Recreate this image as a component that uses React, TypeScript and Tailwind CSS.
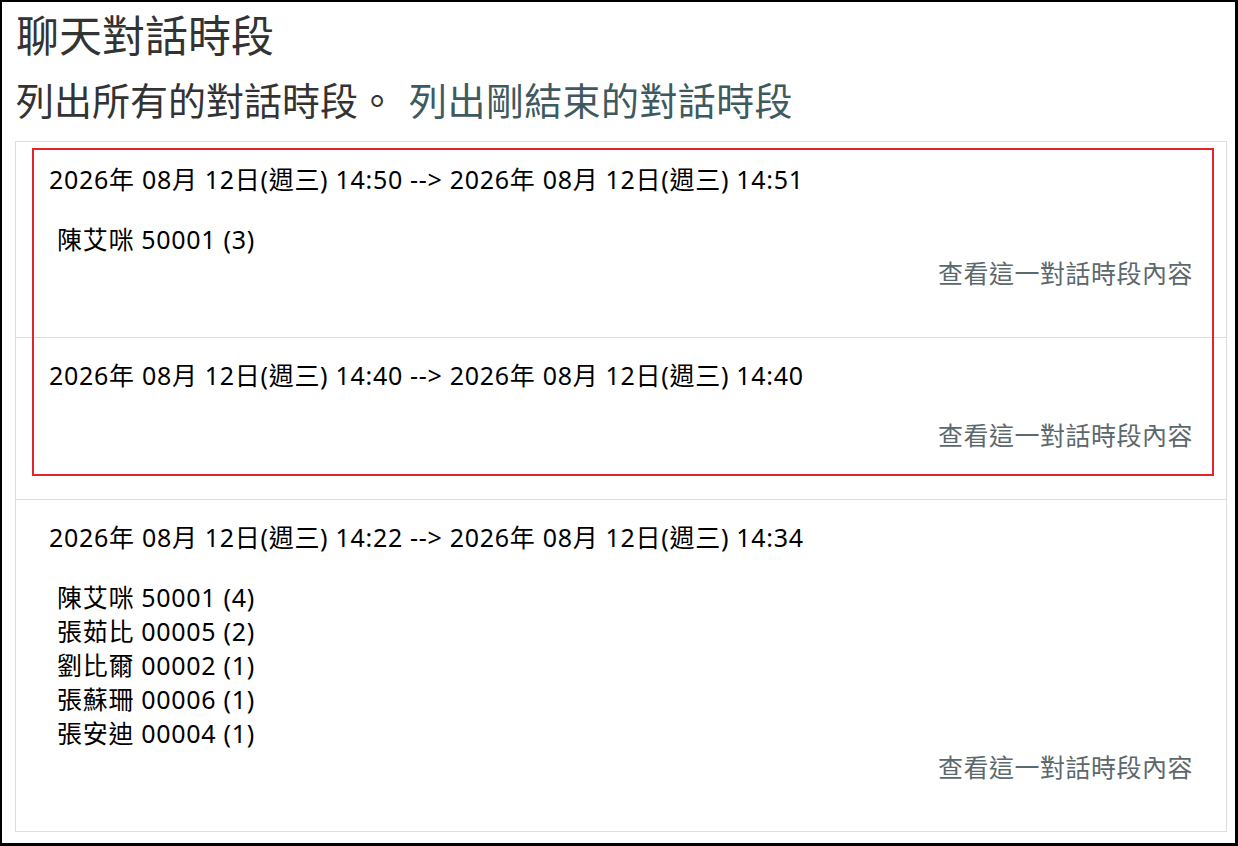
const sessions = [
  {
    range: "2026年 08月 12日(週三) 14:50 --> 2026年 08月 12日(週三) 14:51",
    people: ["陳艾咪 50001 (3)"],
  },
  {
    range: "2026年 08月 12日(週三) 14:40 --> 2026年 08月 12日(週三) 14:40",
    people: [],
  },
  {
    range: "2026年 08月 12日(週三) 14:22 --> 2026年 08月 12日(週三) 14:34",
    people: [
      "陳艾咪 50001 (4)",
      "張茹比 00005 (2)",
      "劉比爾 00002 (1)",
      "張蘇珊 00006 (1)",
      "張安迪 00004 (1)",
    ],
  },
];

export default function App() {
  return (
    <div
      className="h-[846px] w-[1238px] border-2 border-r-[3px] border-b-[3px] border-black bg-white"
      style={{ fontFamily: '"Noto Sans", "Noto Sans CJK TC", sans-serif' }}
    >
      <h1 className="ml-[14px] mt-[9px] text-[43px] leading-[50px] text-[#333]">聊天對話時段</h1>
      <h2 className="ml-[14px] mt-[16px] flex gap-[13px] text-[38px] leading-[46px] text-[#333]">
        <span>列出所有的對話時段。</span>
        <a className="tracking-[0.4px] text-[#3e5a5e]">列出剛結束的對話時段</a>
      </h2>

      <div className="relative ml-[13px] mr-[8px] mt-[18px] border border-[#dddddd]">
        {sessions.map((s, i) => (
          <div
            key={i}
            className={`px-[33px] pt-[20px] pb-[47px] text-[25px] leading-[34px] tracking-[0.7px] text-black ${
              i > 0 ? "border-t border-[#dddddd]" : ""
            }`}
          >
            <div className="mb-[26px]">{s.range}</div>
            {s.people.map((p) => (
              <div key={p} className="pl-[8px]">
                {p}
              </div>
            ))}
            <div className="text-right tracking-[0.5px] text-[#5b686d]">查看這一對話時段內容</div>
          </div>
        ))}
        <div className="pointer-events-none absolute left-[16px] top-[6px] h-[328px] w-[1182px] border-2 border-[#e0262b]" />
      </div>
    </div>
  );
}
